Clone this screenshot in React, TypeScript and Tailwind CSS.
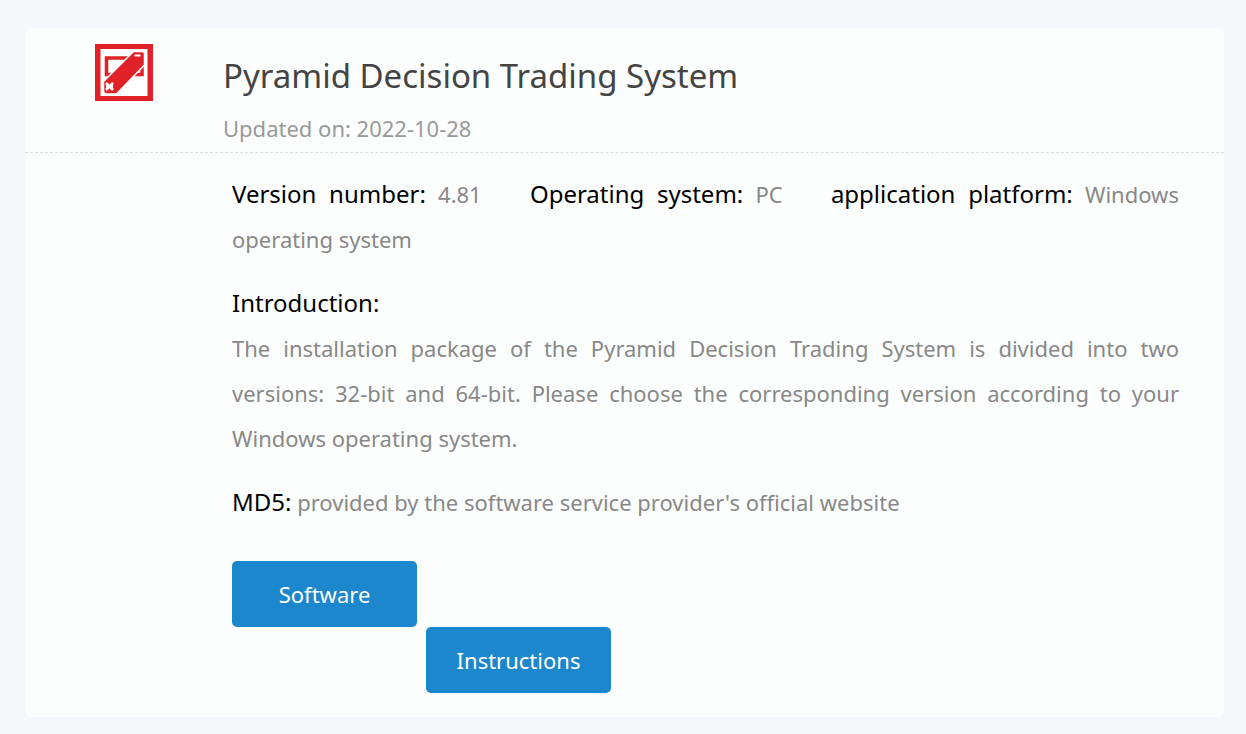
import type { ReactNode } from 'react';

const checksumNote = "provided by the software service provider's official website";

export default function App() {
  return (
    <main className="min-h-screen bg-[#f4f8fa] pt-7 pr-[22px] pb-[17px] pl-[25px] font-['Noto_Sans',sans-serif]">
      <article className="rounded-md bg-[#fcfefd] pb-6">
        {/* Title bar */}
        <header className="flex border-b border-dashed border-[#d9dddd] pt-4">
          <div className="w-[198px] shrink-0 pl-[70px]">
            <Logo />
          </div>
          <div>
            <h1 className="pt-2 text-[33px] leading-[48px] text-[#444]">
              Pyramid Decision Trading System
            </h1>
            <p className="pt-1.5 pb-0.5 text-[22px] leading-[44px] text-[#999]">Updated on: 2022-10-28</p>
          </div>
        </header>

        {/* Details */}
        <section className="pt-[18px] pr-[45px] pl-[207px] text-[22px] leading-[45px] text-[#888]">
          <p className="text-justify">
            <Label>Version number:</Label> <span className="mr-9">4.81</span>{' '}
            <Label>Operating system:</Label> <span className="mr-9">PC</span>{' '}
            <Label>application platform:</Label> Windows operating system
          </p>
          <h2 className="mt-[18px]">
            <Label>Introduction:</Label>
          </h2>
          <p className="text-justify">
            The installation package of the Pyramid Decision Trading System is divided into two
            versions: 32-bit and 64-bit. Please choose the corresponding version according to your
            Windows operating system.
          </p>
          <p className="mt-[18px]">
            <Label>MD5:</Label> {checksumNote}
          </p>
          <div className="mt-9">
            <DownloadLink>Software</DownloadLink>
            <div className="pl-[194px]">
              <DownloadLink>Instructions</DownloadLink>
            </div>
          </div>
        </section>
      </article>
    </main>
  );
}

function Label({ children }: { children: ReactNode }) {
  return <span className="text-2xl leading-[45px] text-black">{children}</span>;
}

function DownloadLink({ children }: { children: ReactNode }) {
  return (
    <a
      href="#"
      className="block w-[185px] rounded-[5px] bg-[#1c87cc] text-center leading-[66px] text-white hover:bg-[#1678b8]"
    >
      {children}
    </a>
  );
}

function Logo() {
  return (
    <svg viewBox="0 0 58 57" className="h-[57px] w-[58px]" role="img" aria-label="Pyramid">
      <rect width="58" height="57" fill="#e02127" />
      <rect x="5.5" y="5" width="47" height="47" fill="#fff" />
      <rect x="11.5" y="14" width="35.5" height="16.5" fill="none" stroke="#e02127" strokeWidth="3.5" />
      {/* Diagonal bar with a white edge */}
      <path
        d="M38.5 7.5h8.5q3 0 2.500 3v10.5L21.5 50h-9.5q-3.5 0-3.5-3.5v-9Z"
        fill="#e02127"
        stroke="#fff"
        strokeWidth="1.5"
      />
      <path d="M39.5 11.5h6" stroke="#fff" strokeWidth="2" />
      <path d="M11 39l7 7M18 39l-7 7M11 42.5h7" stroke="#fff" strokeWidth="2.5" />
    </svg>
  );
}
